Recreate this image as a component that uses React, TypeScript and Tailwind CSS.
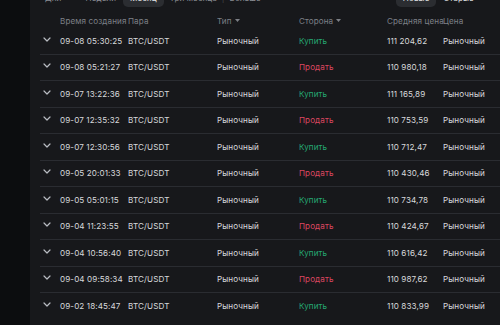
import React from 'react';

type Row = { time: string; side: 'buy' | 'sell'; avg: string };

const rows: Row[] = [
  { time: '09-08 05:30:25', side: 'buy', avg: '111 204,62' },
  { time: '09-08 05:21:27', side: 'sell', avg: '110 980,18' },
  { time: '09-07 13:22:36', side: 'buy', avg: '111 165,89' },
  { time: '09-07 12:35:32', side: 'sell', avg: '110 753,59' },
  { time: '09-07 12:30:56', side: 'buy', avg: '110 712,47' },
  { time: '09-05 20:01:33', side: 'sell', avg: '110 430,46' },
  { time: '09-05 05:01:15', side: 'buy', avg: '110 734,78' },
  { time: '09-04 11:23:55', side: 'sell', avg: '110 424,67' },
  { time: '09-04 10:56:40', side: 'buy', avg: '110 616,42' },
  { time: '09-04 09:58:34', side: 'sell', avg: '110 987,62' },
  { time: '09-02 18:45:47', side: 'buy', avg: '110 833,99' },
];

function Chevron() {
  return (
    <svg width="8" height="5" viewBox="0 0 8 5" fill="none" className="mt-[-3px]">
      <path d="M1 1l3 3 3-3" stroke="#b9bcc2" strokeWidth="1.2" strokeLinecap="round" strokeLinejoin="round" />
    </svg>
  );
}

function Caret() {
  return (
    <svg width="5" height="3" viewBox="0 0 5 3" className="ml-[3px] mt-[-1px]">
      <path d="M0 0h5L2.5 3z" fill="#7d8087" />
    </svg>
  );
}

export default function App() {
  return (
    <div
      className="flex h-[325px] w-[500px] overflow-hidden bg-[#0c0d0f] text-[8.1px] tracking-[0.1px]"
      style={{ fontFamily: 'Inter, "Noto Sans", sans-serif' }}
    >
      <div className="w-[30px] shrink-0" />
      <div className="flex-1 bg-[#17181b] pl-[10px]">
        {/* period tabs, cut off by the top edge */}
        <div className="mt-[-10px] flex h-[17px] items-center text-[#8a8d93]">
          <span className="ml-[5px]">Дни</span>
          <span className="ml-[24px]">Недели</span>
          <span className="ml-[7px] flex h-[17px] items-center rounded-[5px] bg-[#2b2d31] px-[7px] text-[#e3e4e6]">Месяц</span>
          <span className="ml-[6px]">Три месяца</span>
          <span className="ml-[5px] text-[#44464b]">|</span>
          <span className="ml-[5px]">Больше</span>
          <span className="ml-[135px] flex h-[17px] items-center rounded-[5px] bg-[#2b2d31] px-[7px] text-[#e3e4e6]">Новые</span>
          <span className="ml-[7px] text-[#e3e4e6]">Старые</span>
        </div>

        {/* column headers */}
        <div className="flex h-[21px] items-end pb-[1px] text-[#7d8087]">
          <div className="w-[20px] shrink-0" />
          <div className="w-[68px] shrink-0 whitespace-nowrap">Время создания</div>
          <div className="w-[89px] shrink-0">Пара</div>
          <div className="flex w-[82px] shrink-0 items-center">Тип<Caret /></div>
          <div className="flex w-[88px] shrink-0 items-center">Сторона<Caret /></div>
          <div className="w-[56px] shrink-0 whitespace-nowrap">Средняя цена</div>
          <div className="whitespace-nowrap">Цена</div>
        </div>

        {rows.map((r, i) => (
          <div
            key={i}
            className={
              'flex h-[26.5px] items-center text-[#d8d9dc] ' +
              (i < rows.length - 1 ? 'border-b border-[#2a2c31]' : '')
            }
          >
            <div className="flex w-[20px] shrink-0 justify-start pl-[3px]">
              <Chevron />
            </div>
            <div className="w-[68px] shrink-0 whitespace-nowrap">{r.time}</div>
            <div className="w-[89px] shrink-0">BTC/USDT</div>
            <div className="w-[82px] shrink-0">Рыночный</div>
            <div className={'w-[88px] shrink-0 ' + (r.side === 'buy' ? 'text-[#25a872]' : 'text-[#dd4760]')}>
              {r.side === 'buy' ? 'Купить' : 'Продать'}
            </div>
            <div className="w-[56px] shrink-0 whitespace-nowrap">{r.avg}</div>
            <div className="whitespace-nowrap">Рыночный</div>
          </div>
        ))}
      </div>
    </div>
  );
}
